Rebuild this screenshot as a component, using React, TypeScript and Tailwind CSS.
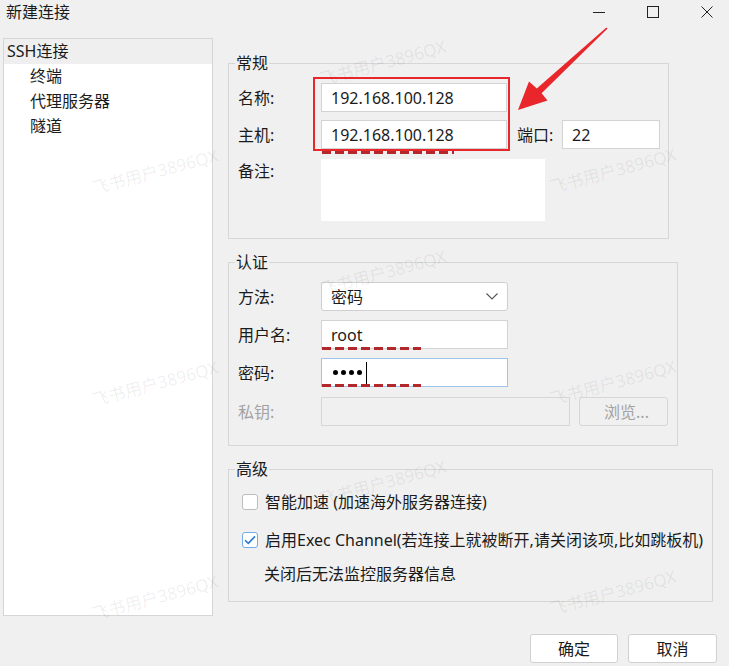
import React from 'react';

const marks = [
  { left: 90, top: 159 },
  { left: 90, top: 371 },
  { left: 90, top: 585 },
  { left: 318, top: 50 },
  { left: 318, top: 260 },
  { left: 318, top: 470 },
  { left: 548, top: 158 },
  { left: 548, top: 370 },
  { left: 548, top: 580 },
];

const Field: React.FC<{ className?: string; children?: React.ReactNode }> = ({ className = '', children }) => (
  <div className={`h-[29px] bg-white border border-[#d3d3d3] pl-[9px] flex items-center leading-none ${className}`}>
    {children}
  </div>
);

const Label: React.FC<{ children: React.ReactNode; muted?: boolean }> = ({ children, muted }) => (
  <span className={`w-[83px] shrink-0 leading-[24px] ${muted ? 'text-[#a3a3a3]' : ''}`}>{children}</span>
);

const App: React.FC = () => {
  return (
    <div className="relative w-[729px] h-[666px] overflow-hidden bg-[#f0f0f0] text-[16px] text-[#1b1b1b] font-['Noto_Sans','Noto_Sans_CJK_SC',sans-serif]">
      {/* title bar */}
      <div className="h-[38px] flex items-start">
        <span className="pl-[6px] leading-[24px]">新建连接</span>
        <div className="ml-auto mr-[16px] mt-[6px] flex gap-[42px] text-[#222]">
          <svg width="12" height="12" viewBox="0 0 12 12">
            <path d="M0 6.5H12" stroke="currentColor" strokeWidth="1" />
          </svg>
          <svg width="12" height="12" viewBox="0 0 12 12">
            <rect x="0.5" y="0.5" width="11" height="11" fill="none" stroke="currentColor" strokeWidth="1" />
          </svg>
          <svg width="12" height="12" viewBox="0 0 12 12">
            <path d="M0.5 0.5L11.5 11.5M11.5 0.5L0.5 11.5" stroke="currentColor" strokeWidth="1" />
          </svg>
        </div>
      </div>

      <div className="flex pl-[3px]">
        {/* tree */}
        <div className="w-[210px] h-[578px] shrink-0 bg-white border border-[#d6d6d6]">
          <div className="h-[25px] leading-[25px] pl-[3px] bg-[#efefef]">SSH连接</div>
          <div className="h-[25px] leading-[25px] pl-[26px]">终端</div>
          <div className="h-[25px] leading-[25px] pl-[26px]">代理服务器</div>
          <div className="h-[25px] leading-[25px] pl-[26px]">隧道</div>
        </div>

        <div className="ml-[15px] pt-[15px] w-[489px] flex flex-col items-start">
          {/* 常规 */}
          <fieldset className="w-[441px] border border-[#d6d6d6] pl-[9px] pb-[17px]">
            <legend className="ml-[-3px] px-[1px] leading-[20px]">常规</legend>
            <div className="flex flex-col pt-[10px]">
              <div className="flex items-center">
                <Label>名称:</Label>
                <Field className="w-[186px]">192.168.100.128</Field>
              </div>
              <div className="flex items-center mt-[8px]">
                <Label>主机:</Label>
                <Field className="w-[186px]">192.168.100.128</Field>
                <span className="ml-[10px] w-[45px] leading-[24px]">端口:</span>
                <Field className="w-[98px]">22</Field>
              </div>
              <div className="flex items-start mt-[10px]">
                <span className="w-[83px] leading-[24px]">备注:</span>
                <div className="w-[224px] h-[62px] bg-white" />
              </div>
            </div>
          </fieldset>

          {/* 认证 */}
          <fieldset className="mt-[13px] w-[450px] border border-[#d6d6d6] pl-[9px] pb-[19px]">
            <legend className="ml-[-3px] px-[1px] leading-[20px]">认证</legend>
            <div className="flex flex-col pt-[10px]">
              <div className="flex items-center">
                <Label>方法:</Label>
                <div className="w-[187px] h-[29px] bg-white border border-[#cfcfcf] rounded-[3px] pl-[9px] pr-[9px] flex items-center justify-between">
                  <span>密码</span>
                  <svg width="12" height="7" viewBox="0 0 12 7" className="text-[#555]">
                    <path d="M0.5 0.5L6 6L11.5 0.5" fill="none" stroke="currentColor" strokeWidth="1.1" />
                  </svg>
                </div>
              </div>
              <div className="flex items-center mt-[9px]">
                <Label>用户名:</Label>
                <Field className="w-[187px]">root</Field>
              </div>
              <div className="flex items-center mt-[9px]">
                <Label>密码:</Label>
                <div className="w-[187px] h-[29px] bg-white border border-[#9fc3ea] pl-[11px] flex items-center gap-[3px]">
                  <span className="w-[5px] h-[5px] rounded-full bg-black" />
                  <span className="w-[5px] h-[5px] rounded-full bg-black" />
                  <span className="w-[5px] h-[5px] rounded-full bg-black" />
                  <span className="w-[5px] h-[5px] rounded-full bg-black" />
                  <span className="ml-[1px] w-px h-[22px] bg-black" />
                </div>
              </div>
              <div className="flex items-center mt-[10px]">
                <Label muted>私钥:</Label>
                <div className="w-[249px] h-[29px] border border-[#d6d6d6] bg-[#f0f0f0]" />
                <div className="ml-[9px] w-[89px] h-[29px] border border-[#d6d6d6] rounded-[3px] flex items-center justify-center text-[#a3a3a3] pl-[6px]">
                  浏览...
                </div>
              </div>
            </div>
          </fieldset>

          {/* 高级 */}
          <fieldset className="mt-[13px] w-[485px] border border-[#d6d6d6] pl-[13px] pb-[15px]">
            <legend className="ml-[-7px] px-[1px] leading-[20px]">高级</legend>
            <div className="flex flex-col pt-[11px]">
              <div className="flex items-center h-[24px]">
                <span className="w-[16px] h-[16px] bg-white border border-[#bdbdbd] rounded-[3px]" />
                <span className="ml-[7px]">智能加速 (加速海外服务器连接)</span>
              </div>
              <div className="flex items-center h-[24px] mt-[14px]">
                <span className="w-[16px] h-[16px] bg-white border border-[#72abe8] rounded-[3px] flex items-center justify-center">
                  <svg width="12" height="10" viewBox="0 0 12 10">
                    <path d="M1 5.2L4.3 8.4L11 1.4" fill="none" stroke="#2b7ad6" strokeWidth="1.6" />
                  </svg>
                </span>
                <span className="ml-[7px]">启用Exec Channel(若连接上就被断开,请关闭该项,比如跳板机)</span>
              </div>
              <div className="h-[24px] leading-[24px] mt-[10px] pl-[22px]">关闭后无法监控服务器信息</div>
            </div>
          </fieldset>

          {/* dialog buttons */}
          <div className="mt-[32px] self-stretch flex justify-end gap-[10px]">
            <button className="w-[88px] h-[29px] bg-white border border-[#d0d0d0] rounded-[3px]">确定</button>
            <button className="w-[89px] h-[29px] bg-white border border-[#d0d0d0] rounded-[3px]">取消</button>
          </div>
        </div>
      </div>

      {/* annotations */}
      <svg className="absolute inset-0 pointer-events-none" width="729" height="666" viewBox="0 0 729 666">
        <rect x="314" y="78" width="195" height="72" fill="none" stroke="#e8262b" strokeWidth="2" />
        <polygon
          points="607.6,28.6 541.6,93.2 547.5,100.5 518,110 529,81.5 536.8,88.6 606.4,27.4"
          fill="#e8262b"
        />
        <g stroke="#b3282b" strokeWidth="3" strokeDasharray="9 4">
          <line x1="322" y1="152.5" x2="454" y2="152.5" />
          <line x1="322" y1="348.5" x2="421" y2="348.5" />
          <line x1="322" y1="385.5" x2="421" y2="385.5" />
        </g>
      </svg>

      {/* watermark */}
      {marks.map((m, i) => (
        <span
          key={i}
          className="absolute pointer-events-none whitespace-nowrap text-[17px] text-black/[0.07] -rotate-[15deg]"
          style={{ left: m.left, top: m.top }}
        >
          飞书用户3896QX
        </span>
      ))}
    </div>
  );
};

export default App;
